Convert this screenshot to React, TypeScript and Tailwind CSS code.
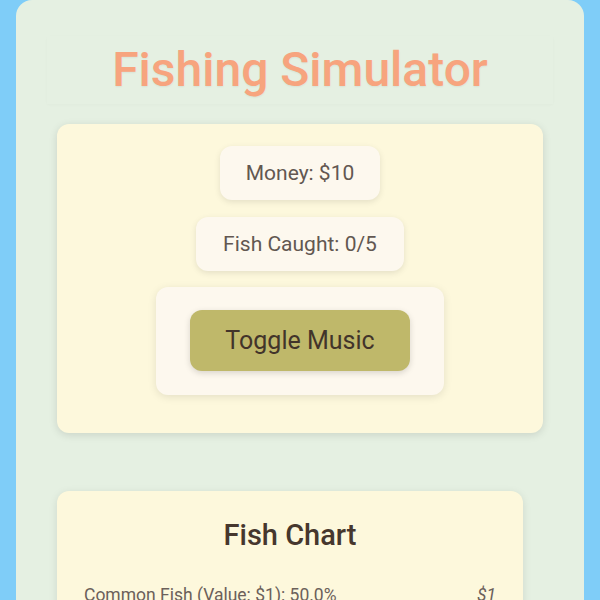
import { useState } from 'react';

const fishTable = [
    { name: 'Common Fish', value: 1, chance: 50.0 },
    { name: 'Uncommon Fish', value: 3, chance: 30.0 },
    { name: 'Rare Fish', value: 10, chance: 15.0 },
    { name: 'Legendary Fish', value: 50, chance: 5.0 },
];

const App = () => {
    const [money] = useState(10);
    const [caught] = useState(0);
    const [musicOn, setMusicOn] = useState(false);

    return (
        <div className="min-h-screen bg-[#7fcdf8] px-4 font-['Roboto',sans-serif]">
            <div className="bg-[#e5f0e2] rounded-t-2xl px-[31px] pt-[36px] pb-10">
                <header className="shadow-[0_1px_3px_rgba(0,0,0,0.025)] py-[6px]">
                    <h1 className="text-center text-[48px] leading-[56px] font-medium text-[#f7a47e] [text-shadow:0_1px_2px_rgba(0,0,0,0.06)]">
                        Fishing Simulator
                    </h1>
                </header>

                <div className="mx-[10px] mt-[20px] bg-[#fdf8dc] rounded-xl shadow-[0_2px_8px_rgba(0,0,0,0.12)] pt-[22px] pb-[38px] flex flex-col items-center">
                    <div className="bg-[#fdf8ee] rounded-xl px-[26px] py-[15px] text-[21px] leading-6 text-[#625751] shadow-[0_2px_6px_rgba(0,0,0,0.1)]">
                        Money: ${money}
                    </div>
                    <div className="mt-[17px] bg-[#fdf8ee] rounded-xl px-[27px] py-[15px] text-[21px] leading-6 text-[#625751] shadow-[0_2px_6px_rgba(0,0,0,0.1)]">
                        Fish Caught: {caught}/5
                    </div>
                    <div className="mt-[16px] bg-[#fdf8ee] rounded-xl px-[34px] pt-[23px] pb-[24px] shadow-[0_2px_8px_rgba(0,0,0,0.1)]">
                        <button
                            onClick={() => setMusicOn(!musicOn)}
                            className="bg-[#bfb86a] rounded-xl px-[35px] py-[16px] text-[25px] leading-[29px] text-[#42342a] shadow-[0_2px_6px_rgba(0,0,0,0.15)]"
                        >
                            Toggle Music
                        </button>
                    </div>
                </div>

                <div className="mx-[10px] mr-[30px] mt-[58px] bg-[#fdf8dc] rounded-xl shadow-[0_2px_8px_rgba(0,0,0,0.1)] px-[27px] pt-[26px] pb-6">
                    <h2 className="text-center text-[29px] leading-9 font-medium text-[#46372d]">Fish Chart</h2>
                    <ul className="mt-[30px] space-y-3">
                        {fishTable.map((f) => (
                            <li key={f.name} className="flex justify-between text-[17.5px] leading-6 text-[#6b605a]">
                                <span>{f.name} (Value: ${f.value}): {f.chance.toFixed(1)}%</span>
                                <span className="italic">${f.value}</span>
                            </li>
                        ))}
                    </ul>
                </div>
            </div>
        </div>
    );
};

export default App;
